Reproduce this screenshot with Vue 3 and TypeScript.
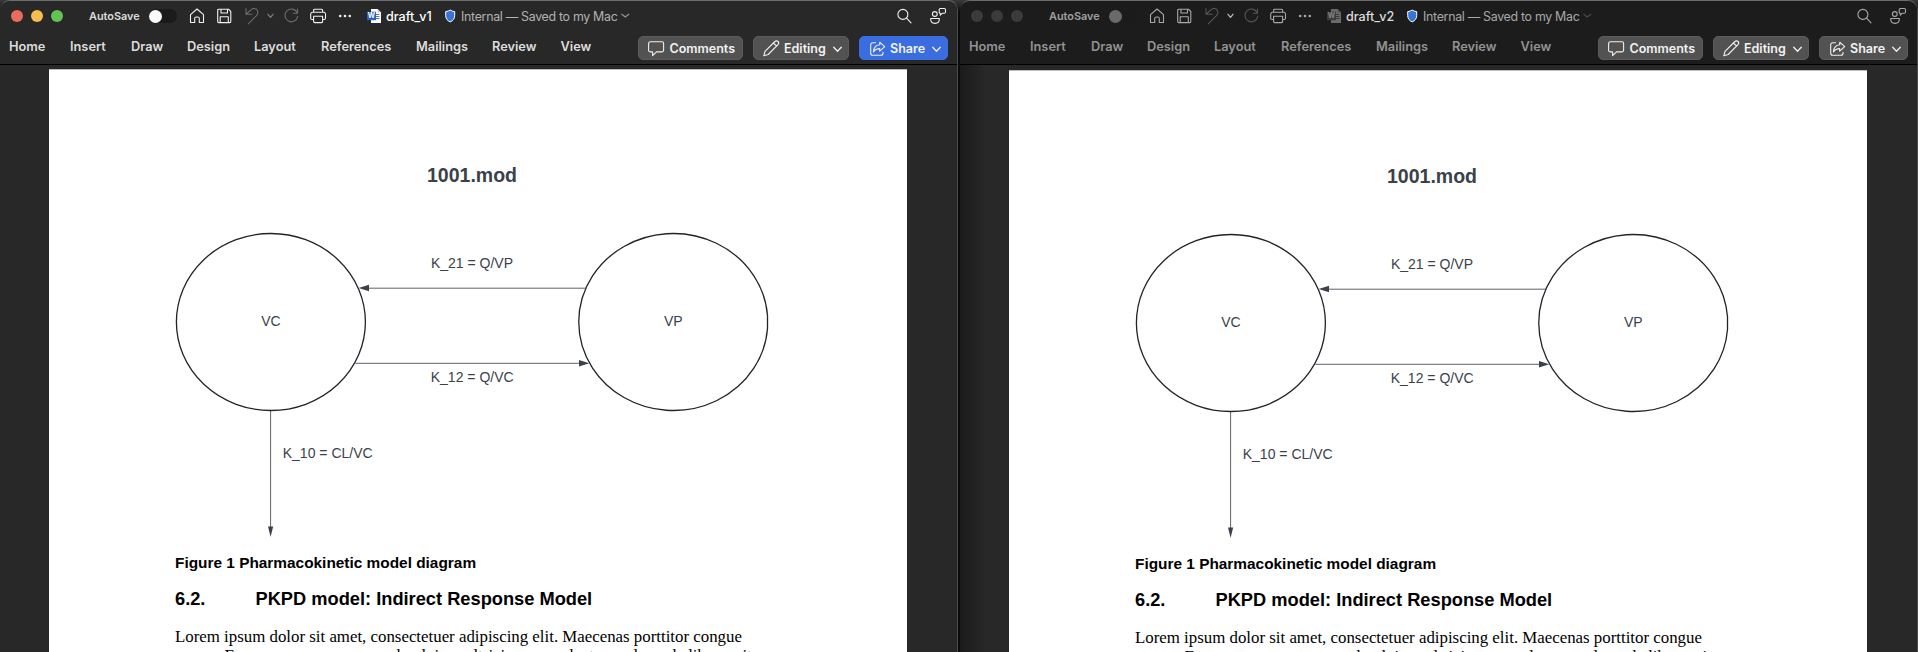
<script setup lang="ts">
interface DocWindow {
  name: string
  active: boolean
}

const windows: DocWindow[] = [
  { name: 'draft_v1', active: true },
  { name: 'draft_v2', active: false },
]

const tabs = ['Home', 'Insert', 'Draw', 'Design', 'Layout', 'References', 'Mailings', 'Review', 'View']
</script>

<template>
  <div class="desktop">
    <section v-for="win in windows" :key="win.name" class="window" :class="win.active ? 'active' : 'inactive'">
      <header class="chrome">
        <div class="titlebar">
          <div class="lights"><i class="light red" /><i class="light amber" /><i class="light green" /></div>
          <span class="autosave">AutoSave</span>
          <div class="toggle"><i class="knob" /></div>
          <svg class="icon" width="16" height="16" viewBox="0 0 16 16"><path d="M1.5 6.7 8 1l6.500 5.700V14.500H10.300V10.600A1.600 1.600 0 0 0 8.700 9H7.300A1.600 1.600 0 0 0 5.700 10.600V14.500H1.500Z" /></svg>
          <svg class="icon" width="16" height="16" viewBox="0 0 16 16"><path d="M.7 2.200A1 1 0 0 1 1.700 1.200H11.500L13.800 3.500V13.600A1 1 0 0 1 12.800 14.600H1.700A1 1 0 0 1 .7 13.600ZM4 1.500V5H10.500V1.500M3.200 14.500V8.700H11.300V14.500" /></svg>
          <svg class="icon dim" width="16" height="18" viewBox="0 0 16 18"><path d="M1 1.500V7.300H7M1.300 7 6 2.800C8.200 .8 11 1 12.200 3.200 13.300 5.300 12.800 7.300 11.300 8.900L3.300 16.800" /></svg>
          <svg class="icon undo-chevron" width="8" height="6" viewBox="0 0 8 6"><path d="M1 1.300 3.500 4.300 6 1.300" /></svg>
          <svg class="icon dim" width="16" height="16" viewBox="0 0 16 16"><path d="M13.500 1V5.200H9.500M13.300 5A6.400 6.400 0 1 0 13.700 8.300" /></svg>
          <svg class="icon" width="17" height="16" viewBox="0 0 17 16"><path d="M3.600 4V2.200A1 1 0 0 1 4.600 1.200H11.600A1 1 0 0 1 12.600 2.200V4M3.600 11.500H2A1.200 1.200 0 0 1 .7 10.300V6A2 2 0 0 1 2.700 4.200H13.500A2 2 0 0 1 15.500 6V10.300A1.200 1.200 0 0 1 14.300 11.500H12.600M3.600 8.300H12.600V13.600A1 1 0 0 1 11.600 14.600H4.600A1 1 0 0 1 3.600 13.600Z" /></svg>
          <svg class="dots" width="16" height="4" viewBox="0 0 16 4"><circle cx="2.200" cy="2" r="1.300" /><circle cx="7" cy="2" r="1.300" /><circle cx="11.800" cy="2" r="1.300" /></svg>
          <svg class="word" width="15" height="16" viewBox="0 0 15 16">
            <path class="sheet" d="M4 1H10.500L14 4.500V15H4Z" />
            <path class="fold" d="M10.500 1V4.500H14Z" />
            <path class="rules" d="M9 6.500H12.500M9 8.500H12.500M9 10.500H12.500" />
            <rect class="badge" y="3.700" width="9" height="8.500" />
            <text x="4.500" y="10.300" text-anchor="middle">W</text>
          </svg>
          <span class="doc-name">{{ win.name }}</span>
          <svg class="shield" width="11" height="14" viewBox="0 0 11 14"><path d="M5.200 1C6.500 2 8 2.500 9.700 2.600V6.500C9.700 9.700 8 11.700 5.200 12.900 2.400 11.700.7 9.700.7 6.500V2.600C2.400 2.500 3.900 2 5.200 1Z" /></svg>
          <span class="status">Internal — Saved to my Mac</span>
          <svg class="icon title-chevron" width="9" height="6" viewBox="0 0 9 6"><path d="M.8 1.300 4.300 4 7.800 1.300" /></svg>
          <span />
          <svg class="icon" width="16" height="16" viewBox="0 0 16 16"><circle cx="5.900" cy="6.400" r="5" /><path d="M9.600 10.200 14 14.800" /></svg>
          <svg class="icon" width="17" height="18" viewBox="0 0 17 18"><circle cx="4.800" cy="7" r="2.400" /><path d="M.7 11.500H9.300V12.300C9.300 15 7.500 16.400 5 16.400S.7 15 .7 12.300ZM9.200 2.700A1.200 1.200 0 0 1 10.400 1.500H14.300A1.200 1.200 0 0 1 15.500 2.700V5A1.200 1.200 0 0 1 14.300 6.200H12.300L10.300 8.200V6.200A1.100 1.100 0 0 1 9.200 5Z" /></svg>
        </div>

        <div class="ribbon">
          <nav class="tabs"><span v-for="tab in tabs" :key="tab">{{ tab }}</span></nav>
          <div class="actions">
            <button class="btn comments">
              <svg class="icon" width="17" height="16" viewBox="0 0 17 16"><path d="M2.200 .8H14A1.600 1.600 0 0 1 15.600 2.400V9.300A1.600 1.600 0 0 1 14 10.900H8.500L4.600 14.600V10.900H2.200A1.600 1.600 0 0 1 .6 9.300V2.400A1.600 1.600 0 0 1 2.200 .8Z" /></svg>
              <span>Comments</span>
            </button>
            <button class="btn editing">
              <svg class="icon" width="17" height="17" viewBox="0 0 17 17"><path d="M.8 15.800 2 11.300 11.900 1.500A2.100 2.100 0 0 1 15 4.600L5.200 14.500ZM10.500 3 13.600 6.100" /></svg>
              <span>Editing</span>
              <svg class="icon chevron" width="9" height="7" viewBox="0 0 9 7"><path d="M.7 1.200 4.500 5.200 8.300 1.200" /></svg>
            </button>
            <button class="btn share">
              <svg class="icon" width="16" height="16" viewBox="0 0 16 16"><path d="M5.500 1.700H2.700A2 2 0 0 0 .7 3.700V12.300A2 2 0 0 0 2.700 14.300H11A2 2 0 0 0 13 12.300V11.200M9.700 1.200 14.700 5.700 9.700 10.100V7.600C7 7.600 5 8.400 3.400 10.900 3.700 6.800 6 4 9.700 3.700Z" /></svg>
              <span>Share</span>
              <svg class="icon chevron" width="9" height="7" viewBox="0 0 9 7"><path d="M.7 1.200 4.500 5.200 8.300 1.200" /></svg>
            </button>
          </div>
        </div>
      </header>

      <main class="canvas">
        <article class="page">
          <svg class="diagram" width="858" height="479" viewBox="49 70 858 479">
            <g class="node">
              <ellipse cx="270.900" cy="322" rx="94.500" ry="88.500" />
              <path d="M767.500 315.500A94.500 88.500 0 1 0 767.500 328.500Z" />
            </g>
            <g class="edge">
              <path d="M369 288.200H586.500" />
              <path d="M355.500 363.300H580" />
              <path d="M270.600 411V527" />
            </g>
            <g class="head">
              <path d="M358.600 288 369 284.700V291.300Z" />
              <path d="M589.300 363.300 579 360V366.600Z" />
              <path d="M270.600 537 268 526.500H273.200Z" />
            </g>
            <g class="labels">
              <text class="model" x="472" y="181.600">1001.mod</text>
              <text x="472" y="268.300">K_21 = Q/VP</text>
              <text x="472.200" y="382.200">K_12 = Q/VC</text>
              <text x="270.900" y="325.600">VC</text>
              <text x="673.300" y="325.600">VP</text>
              <text x="327.700" y="457.600">K_10 = CL/VC</text>
            </g>
          </svg>
          <p class="caption">Figure 1 Pharmacokinetic model diagram</p>
          <h2 class="heading"><span class="number">6.2.</span><span>PKPD model: Indirect Response Model</span></h2>
          <p class="body">
            Lorem ipsum dolor sit amet, consectetuer adipiscing elit. Maecenas porttitor congue<br />
            massa. Fusce posuere, magna sed pulvinar ultricies, purus lectus malesuada libero, sit
          </p>
        </article>
      </main>
    </section>
  </div>
</template>

<style>
body {
  margin: 0;
  background: #0b0b0b;
}
</style>

<style scoped>
.desktop {
  display: flex;
  gap: 2px;
  width: 1918px;
  height: 652px;
  overflow: hidden;
  background: linear-gradient(#3a3b38, #0b0b0b 12px);
}
.window {
  --fg: #dcdcdc;
  --icon: #f0f0f0;
  --shift: 0px;
  box-sizing: border-box;
  width: 958px;
  flex: none;
  height: 664px;
  display: flex;
  flex-direction: column;
  overflow: hidden;
  border-top: 1px solid #6b6d6b;
  border-right: 1px solid #4d4d4d;
  border-radius: 10px 10px 0 0;
  background: #282828;
  font-family: Inter, "Liberation Sans", sans-serif;
}
.inactive {
  --fg: #929292;
  --icon: #a8a8a8;
  --shift: 2px;
}
.chrome {
  height: 63px;
  flex: none;
  border-bottom: 1px solid #000;
  background: #282828;
}
.inactive .chrome {
  background: #1c1c1c;
}
.titlebar {
  display: grid;
  grid-template-columns: 78px 60px 40px 28px 28px 22px 17px 26px 28px 29px 19px calc(59px + var(--shift)) 16px 160px 10px 1fr 33px 17px;
  align-items: center;
  height: 30px;
  padding: 0 10px 0 11px;
}
.icon {
  display: block;
  overflow: visible;
  fill: none;
  stroke: var(--icon);
  stroke-width: 1.1;
  stroke-linejoin: round;
  stroke-linecap: round;
}
.lights {
  display: flex;
  gap: 8px;
}
.light {
  width: 12px;
  height: 12px;
  border-radius: 50%;
}
.red { background: #ec6a5e; }
.amber { background: #f4bf50; }
.green { background: #61c554; }
.inactive .light { background: #3b3b3b; }
.autosave {
  font-size: 10.900px;
  font-weight: 600;
  color: var(--fg);
}
.inactive .autosave { color: #a0a0a0; }
.toggle {
  width: 28px;
  height: 14px;
  border-radius: 7px;
  background: #1b1b1b;
  display: flex;
  align-items: center;
}
.knob {
  width: 13px;
  height: 13px;
  border-radius: 50%;
  background: #fafafa;
}
.inactive .knob { background: #6a6a6a; }
.dim { stroke: #6b6b6b; }
.inactive .dim { stroke: #555; }
.undo-chevron { stroke: #7c7c7c; stroke-width: 1.300; }
.inactive .undo-chevron { stroke: #b8b8b8; }
.dots { fill: var(--icon); }
.sheet { fill: #fff; }
.fold { fill: #c9d3e4; }
.rules { stroke: #4b7fd0; }
.badge { fill: #2f5fbd; }
.word text {
  fill: #fff;
  font: 700 7px Inter, sans-serif;
}
.inactive .sheet { fill: #6b6b6b; }
.inactive .fold { fill: #555; }
.inactive .rules { stroke: #3c3c3c; }
.inactive .badge { fill: #3d3d3d; }
.inactive .word text { fill: #858585; }
.doc-name {
  font-size: 12.600px;
  font-weight: 500;
  color: #fff;
  white-space: nowrap;
}
.inactive .doc-name { color: #dcdcdc; }
.shield {
  fill: #3576d8;
  stroke: #fff;
  stroke-width: 1;
}
.status {
  font-size: 12.400px;
  letter-spacing: -0.300px;
  white-space: nowrap;
  color: #b2b2b2;
}
.inactive .status { color: #a8a8a8; }
.title-chevron { stroke: #8f8f8f; stroke-width: 1.300; }
.inactive .title-chevron { stroke: #464646; }
.ribbon {
  display: flex;
  justify-content: space-between;
  height: 33px;
  padding: 0 9px 0 9px;
}
.tabs {
  display: grid;
  grid-template-columns: 61px 61px 56px 67px 67px 95px 76px 68.500px 40px;
  padding-top: 7.500px;
  font-size: 12.800px;
  line-height: 16px;
  font-weight: 600;
  color: var(--fg);
}
.actions {
  display: flex;
  gap: 10px;
  padding-top: 5px;
}
.btn {
  box-sizing: border-box;
  height: 24px;
  padding: 1px 0 0;
  border: 1px solid #5b5b5b;
  border-radius: 5px;
  background: #525252;
  display: flex;
  align-items: center;
  color: #f3f3f3;
  --icon: #f0f0f0;
  font: 600 12.500px/22px Inter, sans-serif;
}
.comments { width: 105px; padding-left: 9px; gap: 4.500px; }
.editing { width: 96px; padding-left: 9px; gap: 4px; }
.share { width: 89px; padding-left: 10px; gap: 4px; }
.chevron {
  margin: 1px 6px 0 auto;
  stroke-width: 1.300;
}
.active .share {
  background: #3a6de0;
  border-color: #3a6de0;
}
.canvas {
  flex: 1;
  padding: 4px 0 0 49px;
}
.inactive .canvas {
  padding-top: 5px;
  background: linear-gradient(90deg, #1b1b1b, #282828 26px);
}
.page {
  width: 858px;
  height: 600px;
  overflow: hidden;
  border-top: 1px solid #bdbdbd;
  background: #fff;
  color: #000;
}
.diagram {
  display: block;
}
.node { fill: none; stroke: #22222a; stroke-width: 1.300; }
.edge { fill: none; stroke: #4d5059; stroke-width: 0.900; }
.head { fill: #3a414a; }
.labels {
  font: 14px "Liberation Sans", Arial, sans-serif;
  fill: #3a414a;
  text-anchor: middle;
}
.model {
  font-size: 19.500px;
  font-weight: 700;
}
.caption,
.heading,
.body {
  margin: 0 0 0 126px;
  white-space: nowrap;
}
.caption {
  font: 700 15.400px/20px "Liberation Sans", Arial, sans-serif;
  padding-top: 4px;
}
.heading {
  display: flex;
  font: 700 18.250px/22px "Liberation Sans", Arial, sans-serif;
  padding-top: 15px;
}
.number {
  width: 80.500px;
}
.body {
  font: 16.850px/19px "Liberation Serif", "Times New Roman", serif;
  padding-top: 17px;
}
</style>
